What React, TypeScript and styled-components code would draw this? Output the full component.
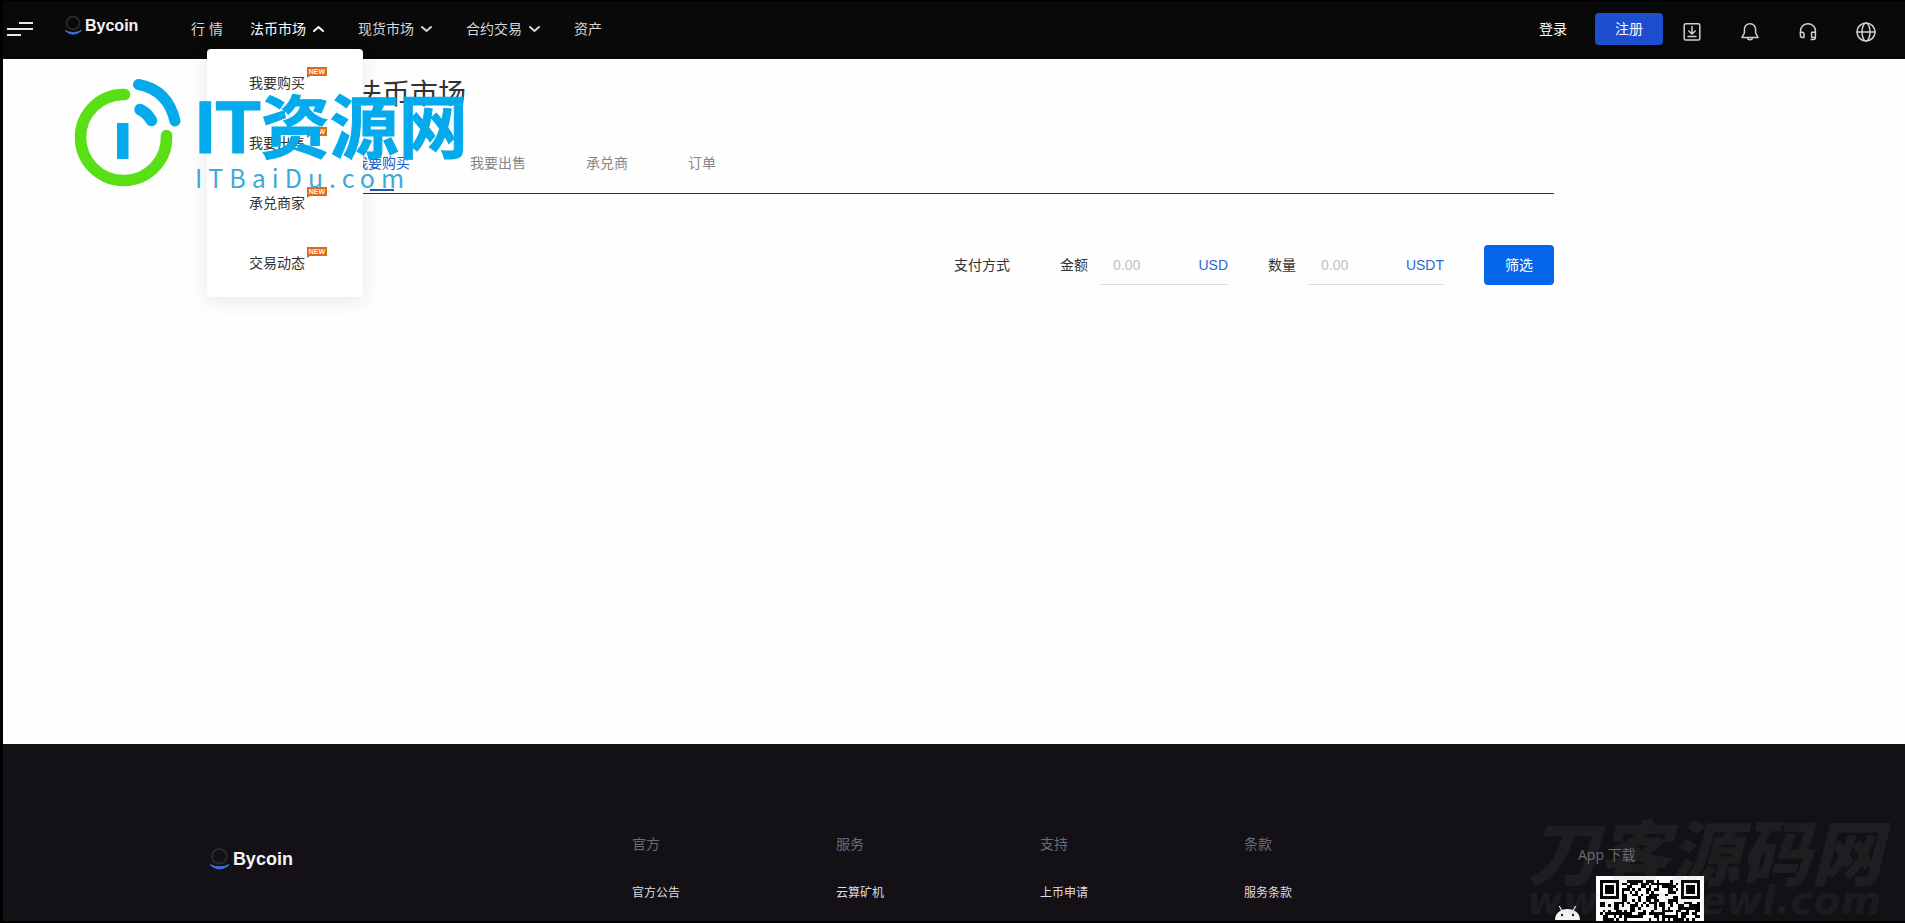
import React from "react";
import styled, { createGlobalStyle } from "styled-components";

const sans = `"Liberation Sans", "Noto Sans CJK SC", sans-serif`;

const GlobalStyle = createGlobalStyle`
  *, *::before, *::after { box-sizing: border-box; }
  body { margin: 0; background: #000; font: 14px/20px ${sans}; color: #333; }
  a { color: inherit; text-decoration: none; }
  button, input { font: inherit; }
  h1, h2, ul { margin: 0; padding: 0; font-weight: 400; list-style: none; }
`;

const Page = styled.div`
  position: relative;
  display: flex;
  flex-direction: column;
  height: 100vh;
  overflow: hidden;
  border: solid #000;
  border-width: 1px 0 2px 3px;
`;

/* ---------- header ---------- */

const Header = styled.header`
  display: flex;
  flex-shrink: 0;
  align-items: center;
  justify-content: space-between;
  height: 58px;
  padding: 0 29px 2px 4px;
  background: #090909;
  color: #d6d6d6;
`;

const HeaderSide = styled.div`
  display: flex;
  align-items: center;
`;

const MenuButton = styled.button`
  display: flex;
  margin-right: 31px;
  padding: 0;
  border: 0;
  background: none;
  color: #e8e8e8;
`;

const HomeLink = styled.a<{ $width: number }>`
  display: block;
  flex-shrink: 0;
  width: ${(p) => p.$width}px;

  svg { display: block; }
`;

const MainNav = styled.nav`
  display: flex;
  gap: 27px;
  margin-left: 52px;
`;

const NavItem = styled.div`
  position: relative;
  z-index: 2;
`;

const NavLink = styled.a<{ $active?: boolean; $menu?: boolean }>`
  display: flex;
  align-items: center;
  gap: 6px;
  padding-right: ${(p) => (p.$menu ? 6 : 0)}px;
  color: ${(p) => (p.$active ? "#fff" : "#d6d6d6")};
  white-space: pre;
`;

const Dropdown = styled.ul`
  position: absolute;
  top: 30px;
  left: -43px;
  width: 156px;
  && { padding: 4px 0; }
  border-radius: 4px;
  background: #fff;
  box-shadow: 0 4px 20px rgba(40, 30, 70, 0.1);
`;

const DropdownLink = styled.a`
  position: relative;
  display: flex;
  align-items: center;
  height: 60px;
  padding-left: 42px;
  color: #333;
`;

const NewBadge = styled.span`
  position: absolute;
  top: 14px;
  left: 100px;
  width: 20px;
  height: 9px;
  background: #dc6a1c;
  color: #fff1dc;
  font-size: 7px;
  font-weight: 700;
  line-height: 9px;
  text-align: center;

  &::after {
    content: "";
    position: absolute;
    top: 9px;
    left: 0;
    border-top: 2px solid #dc6a1c;
    border-right: 3px solid transparent;
  }
`;

const LoginLink = styled.a`
  margin-right: 28px;
  color: #fff;
`;

const RegisterButton = styled.button`
  width: 68px;
  height: 32px;
  padding: 0;
  border: 0;
  border-radius: 4px;
  background: #1c4ecd;
  color: #fff;
`;

const Tools = styled.div`
  display: flex;
  gap: 38px;
  margin-left: 19px;
  padding-top: 6px;
`;

const ToolButton = styled.button`
  display: flex;
  width: 20px;
  height: 20px;
  padding: 0;
  border: 0;
  background: none;
  color: #cfcfcf;
`;

/* ---------- market page ---------- */

const Main = styled.main`
  flex-shrink: 0;
  min-height: calc(100vh - 238px);
  background: #fefefe;
`;

const Container = styled.div`
  max-width: 1200px;
  margin: 0 auto;
  padding-top: 16px;
`;

const Title = styled.h1`
  font-size: 28px;
  line-height: 40px;
  color: #333;
`;

const Tabs = styled.nav`
  display: flex;
  gap: 60px;
  margin-top: 38px;
  border-bottom: 1px solid #333;
`;

const Tab = styled.a<{ $active?: boolean }>`
  position: relative;
  padding-bottom: 20px;
  color: ${(p) => (p.$active ? "#1c5bc4" : "#868686")};

  &::after {
    content: "";
    position: absolute;
    bottom: 2px;
    left: calc(50% - 12px);
    width: 24px;
    height: 2px;
    background: ${(p) => (p.$active ? "#1c5bb0" : "transparent")};
  }
`;

const FilterForm = styled.form`
  display: flex;
  align-items: center;
  justify-content: flex-end;
  gap: 40px;
  margin-top: 51px;
`;

const PayMethod = styled.span`
  margin-right: 10px;
`;

const Field = styled.label`
  display: flex;
  align-items: center;
  gap: 12px;
`;

const InputBox = styled.span<{ $width: number }>`
  display: flex;
  align-items: center;
  width: ${(p) => p.$width}px;
  height: 40px;
  padding-left: 13px;
  border-bottom: 1px solid #d9dbe0;
  color: #2f66d0;
`;

const NumberInput = styled.input`
  flex: 1;
  min-width: 0;
  padding: 0;
  border: 0;
  outline: 0;
  background: none;
  color: #333;

  &::placeholder { color: #c0c2c8; opacity: 1; }
`;

const FilterButton = styled.button`
  width: 70px;
  height: 40px;
  padding: 0;
  border: 0;
  border-radius: 4px;
  background: #0566ea;
  color: #fff;
`;

/* ---------- footer ---------- */

const Footer = styled.footer`
  flex-shrink: 0;
  padding: 90px 0 120px;
  background: #131115;
`;

const FooterInner = styled.div`
  display: flex;
  max-width: 1500px;
  margin: 0 auto;
  padding-left: 5px;
`;

const FooterBrand = styled.div`
  width: 423px;
  padding-top: 11px;
`;

const FooterColumn = styled.section`
  width: 204px;
`;

const FooterHeading = styled.h2`
  font-size: 14px;
  line-height: 20px;
  color: #6c6b72;
`;

const FooterLink = styled.a`
  display: block;
  margin-top: 29px;
  font-size: 12px;
  line-height: 20px;
  color: #dcdce4;
`;

const AppBlock = styled.section`
  width: 156px;
  margin-left: auto;
  padding-top: 11px;
`;

const AppHeading = styled(FooterHeading)`
  padding-left: 30px;
  font-family: "Open Sans", "Noto Sans CJK SC", sans-serif;
`;

const AppRow = styled.div`
  display: flex;
  gap: 9px;
  margin-top: 11px;

  svg { display: block; flex-shrink: 0; }
`;

const AndroidSlot = styled.div`
  padding-top: 30px;
`;

/* ---------- watermarks ---------- */

const SiteMark = styled.div`
  position: absolute;
  top: 76px;
  left: 67px;
  z-index: 5;
  display: flex;
  gap: 11px;
  pointer-events: none;
`;

const SiteMarkText = styled.div`
  padding-top: 7px;
  white-space: nowrap;
  color: #04aaec;
`;

const SiteMarkName = styled.div`
  display: flex;
  align-items: baseline;
  height: 78px;
  font: 700 69px/78px "Noto Sans CJK SC", sans-serif;
  -webkit-text-stroke: 1px #04aaec;
`;

const SiteMarkLatin = styled.span`
  font: 700 74px/78px ${sans};
`;

const SiteMarkUrl = styled.div`
  font: 400 25px/30px "Noto Sans CJK SC", sans-serif;
  letter-spacing: 6px;
  color: #3fa9d8;
`;

const SourceMark = styled.div`
  position: absolute;
  right: 23px;
  bottom: 0;
  z-index: 5;
  color: rgba(128, 128, 128, 0.11);
  font-style: italic;
  font-weight: 900;
  white-space: nowrap;
  pointer-events: none;
`;

const SourceMarkName = styled.div`
  font-family: "Noto Sans CJK SC", sans-serif;
  font-size: 71px;
  line-height: 64px;
`;

const SourceMarkUrl = styled.div`
  font-family: "DejaVu Sans", sans-serif;
  font-size: 39px;
  line-height: 40px;
`;

/* ---------- drawings ---------- */

const BrandLogo = ({ size }: { size: number }) => (
  <svg width={size} height={Math.round((size * 32) / 76)} viewBox="0 0 76 32" role="img" aria-label="Bycoin">
    <circle cx="9" cy="10" r="6.5" fill="none" stroke="#29292b" strokeWidth="1.8" />
    <path d="M1 17.5Q9 25 17.5 17.5Q9 21.5 1 17.5Z" fill="#3d6fd8" stroke="#3d6fd8" strokeWidth="1" />
    <text x="21" y="18" fill="#f2f2f2" fontFamily="'Liberation Sans', sans-serif" fontWeight="700" fontSize="16">
      Bycoin
    </text>
  </svg>
);

const MenuIcon = () => (
  <svg width="26" height="14" viewBox="0 0 26 14" fill="currentColor" aria-hidden="true">
    <rect x="12" y="0" width="14" height="2" />
    <rect x="0" y="6" width="26" height="2" />
    <rect x="0" y="12" width="14" height="2" />
  </svg>
);

const Chevron = ({ up }: { up?: boolean }) => (
  <svg width="13" height="10" viewBox="0 0 13 10" fill="none" stroke="currentColor" strokeWidth="2" aria-hidden="true">
    <path d={up ? "M2 7L6.5 3L11 7" : "M2 3L6.5 7L11 3"} strokeLinecap="round" />
  </svg>
);

const ToolIcon = ({ children }: { children: React.ReactNode }) => (
  <svg width="20" height="20" viewBox="0 0 20 20" fill="none" stroke="currentColor" strokeWidth="1.5" strokeLinecap="round" strokeLinejoin="round" aria-hidden="true">
    {children}
  </svg>
);

const tools = [
  {
    label: "下载",
    icon: (
      <ToolIcon>
        <rect x="2.2" y="1.7" width="15.6" height="16.4" rx="1.5" />
        <path d="M10 4.5V11.5M6.8 9L10 12L13.2 9M6 14.5H14" />
      </ToolIcon>
    ),
  },
  {
    label: "通知",
    icon: (
      <ToolIcon>
        <path d="M10 1.8C6.4 1.8 4.4 4.4 4.4 7.6V11L2 15.4H18L15.6 11V7.6C15.6 4.4 13.6 1.8 10 1.8Z" />
        <path d="M7.6 16.6Q10 19 12.4 16.6" />
      </ToolIcon>
    ),
  },
  {
    label: "客服",
    icon: (
      <ToolIcon>
        <path d="M2.6 11V8.6A7.4 6.9 0 0 1 17.4 8.6V15.6Q17.4 17.6 15.4 17.6H13.2" />
        <path d="M2.4 10.2H4.2Q6 10.2 6 12V15.4H4.2Q2.4 15.4 2.4 13.4Z" />
        <path d="M17.4 10.2H13.6V15.4H17.4" />
      </ToolIcon>
    ),
  },
  {
    label: "语言",
    icon: (
      <ToolIcon>
        <circle cx="10" cy="10" r="9" />
        <ellipse cx="10" cy="10" rx="4" ry="9" />
        <path d="M1 10H19" />
      </ToolIcon>
    ),
  },
];

const MarkRing = () => (
  <svg width="114" height="114" viewBox="0 0 114 114" fill="none" strokeLinecap="round" aria-hidden="true">
    <path d="M54.5 17.5A43 43 0 1 0 96.5 58.5" stroke="#58df16" strokeWidth="11.5" />
    <path d="M68.5 7.5Q98 13 105 44" stroke="#04aaec" strokeWidth="11" />
    <path d="M70 32.5Q77 36 81.5 43.5" stroke="#04aaec" strokeWidth="11.5" />
    <rect x="47" y="46" width="11.5" height="36" fill="#04aaec" />
  </svg>
);

const AndroidIcon = () => (
  <svg width="39" height="44" viewBox="0 0 39 44" fill="#f3f3f3" aria-hidden="true">
    <path d="M7 14C7 7 12.5 3 19.5 3S32 7 32 14Z" />
    <path d="M11.5 0.5L14 5M27.5 0.5L25 5" stroke="#f3f3f3" strokeWidth="1.2" strokeLinecap="round" />
    <circle cx="14" cy="9" r="1.2" fill="#222" />
    <circle cx="25" cy="9" r="1.2" fill="#222" />
    <rect x="7" y="15.5" width="25" height="20" rx="2" />
    <rect x="1" y="15" width="4.5" height="15" rx="2.2" />
    <rect x="33.5" y="15" width="4.5" height="15" rx="2.2" />
  </svg>
);

const QR_SIZE = 37;

const isDark = (x: number, y: number): boolean => {
  const corners = [[0, 0], [QR_SIZE - 7, 0], [0, QR_SIZE - 7]];
  for (const [cx, cy] of corners) {
    const ring = Math.max(Math.abs(x - cx - 3), Math.abs(y - cy - 3));
    if (ring <= 4) return ring === 3 || ring <= 1;
  }
  let h = (x * 374761393 + y * 668265263) | 0;
  h = Math.imul(h ^ (h >>> 13), 1274126177);
  return ((h ^ (h >>> 16)) & 15) < 8;
};

const qrPath = Array.from({ length: QR_SIZE * QR_SIZE }, (_, i) => [i % QR_SIZE, Math.floor(i / QR_SIZE)])
  .filter(([x, y]) => isDark(x, y))
  .map(([x, y]) => `M${x} ${y}h1v1h-1z`)
  .join("");

const QrCode = () => (
  <svg width="108" height="108" viewBox="-1.5 -1.5 40 40" shapeRendering="crispEdges" role="img" aria-label="App 下载">
    <rect x="-1.5" y="-1.5" width="40" height="40" fill="#fff" />
    <path d={qrPath} fill="#000" />
  </svg>
);

/* ---------- data ---------- */

const fiatMenu = ["我要购买", "我要出售", "承兑商家", "交易动态"];
const tabs = ["我要购买", "我要出售", "承兑商", "订单"];
const footerColumns = [
  { title: "官方", link: "官方公告" },
  { title: "服务", link: "云算矿机" },
  { title: "支持", link: "上币申请" },
  { title: "条款", link: "服务条款" },
];

export default function App() {
  return (
    <Page>
      <GlobalStyle />
      <Header>
        <HeaderSide>
          <MenuButton type="button" aria-label="菜单">
            <MenuIcon />
          </MenuButton>
          <HomeLink href="#" $width={75}>
            <BrandLogo size={76} />
          </HomeLink>
          <MainNav>
            <NavLink href="#">行 情</NavLink>
            <NavItem>
              <NavLink href="#" $active $menu>
                法币市场
                <Chevron up />
              </NavLink>
              <Dropdown>
                {fiatMenu.map((name) => (
                  <li key={name}>
                    <DropdownLink href="#">
                      {name}
                      <NewBadge>NEW</NewBadge>
                    </DropdownLink>
                  </li>
                ))}
              </Dropdown>
            </NavItem>
            <NavLink href="#" $menu>
              现货市场
              <Chevron />
            </NavLink>
            <NavLink href="#" $menu>
              合约交易
              <Chevron />
            </NavLink>
            <NavLink href="#">资产</NavLink>
          </MainNav>
        </HeaderSide>
        <HeaderSide>
          <LoginLink href="#">登录</LoginLink>
          <RegisterButton type="button">注册</RegisterButton>
          <Tools>
            {tools.map((tool) => (
              <ToolButton key={tool.label} type="button" aria-label={tool.label}>
                {tool.icon}
              </ToolButton>
            ))}
          </Tools>
        </HeaderSide>
      </Header>

      <Main>
        <Container>
          <Title>法币市场</Title>
          <Tabs>
            {tabs.map((name, i) => (
              <Tab key={name} href="#" $active={i === 0}>
                {name}
              </Tab>
            ))}
          </Tabs>
          <FilterForm>
            <PayMethod>支付方式</PayMethod>
            <Field>
              金额
              <InputBox $width={128}>
                <NumberInput placeholder="0.00" />
                USD
              </InputBox>
            </Field>
            <Field>
              数量
              <InputBox $width={136}>
                <NumberInput placeholder="0.00" />
                USDT
              </InputBox>
            </Field>
            <FilterButton type="button">筛选</FilterButton>
          </FilterForm>
        </Container>
      </Main>

      <Footer>
        <FooterInner>
          <FooterBrand>
            <HomeLink href="#" $width={86}>
              <BrandLogo size={86} />
            </HomeLink>
          </FooterBrand>
          {footerColumns.map((column) => (
            <FooterColumn key={column.title}>
              <FooterHeading>{column.title}</FooterHeading>
              <FooterLink href="#">{column.link}</FooterLink>
            </FooterColumn>
          ))}
          <AppBlock>
            <AppHeading>App 下载</AppHeading>
            <AppRow>
              <AndroidSlot>
                <AndroidIcon />
              </AndroidSlot>
              <QrCode />
            </AppRow>
          </AppBlock>
        </FooterInner>
      </Footer>

      <SiteMark>
        <MarkRing />
        <SiteMarkText>
          <SiteMarkName>
            <SiteMarkLatin>IT</SiteMarkLatin>资源网
          </SiteMarkName>
          <SiteMarkUrl>ITBaiDu.com</SiteMarkUrl>
        </SiteMarkText>
      </SiteMark>

      <SourceMark>
        <SourceMarkName>刀客源码网</SourceMarkName>
        <SourceMarkUrl>www.dkewl.com</SourceMarkUrl>
      </SourceMark>
    </Page>
  );
}
